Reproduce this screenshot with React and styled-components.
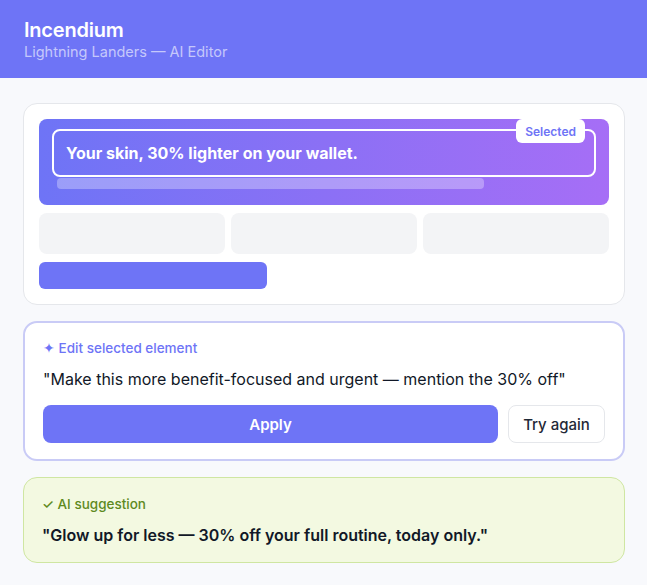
import React from "react";
import styled, { createGlobalStyle } from "styled-components";

const GlobalStyle = createGlobalStyle`
  * { box-sizing: border-box; }
  body {
    margin: 0;
    background: #f8f9fc;
    font-family: "Inter", "Noto Sans", sans-serif;
    color: #1f2937;
  }
`;

const Page = styled.div`
  width: 647px;
  min-height: 585px;
  background: #f8f9fc;
`;

const Header = styled.header`
  height: 78px;
  background: #6e74f6;
  padding: 18px 24px 0;
`;

const Title = styled.h1`
  margin: 0;
  font-size: 20px;
  font-weight: 600;
  color: #ffffff;
  letter-spacing: -0.2px;
  line-height: 24px;
`;

const Subtitle = styled.div`
  font-size: 14.5px;
  color: #c5c8fb;
  line-height: 18px;
  margin-top: 1px;
`;

const Body = styled.main`
  display: flex;
  flex-direction: column;
  gap: 16px;
  padding: 25px 22px 0 23px;
`;

const Card = styled.section`
  background: ${(p) => p.$bg || "#ffffff"};
  border: ${(p) => p.$border || "1px solid #e5e7eb"};
  border-radius: 14px;
  padding: ${(p) => p.$pad || "15px"};
`;

const Hero = styled.div`
  position: relative;
  height: 86px;
  border-radius: 8px;
  background: linear-gradient(90deg, #6e74f6 0%, #8b70f5 50%, #a66ef6 100%);
  padding: 10px 13px 0 13px;
`;

const SelectedBox = styled.div`
  height: 48px;
  border: 2.5px solid #ffffff;
  border-radius: 8px;
  display: flex;
  align-items: center;
  padding-left: 12px;
  font-size: 16px;
  font-weight: 700;
  color: #ffffff;
`;

const Badge = styled.span`
  position: absolute;
  top: 0;
  right: 24px;
  height: 24px;
  display: flex;
  align-items: center;
  background: #ffffff;
  color: #6e74f6;
  font-size: 12px;
  font-weight: 600;
  padding: 0 9px;
  border-radius: 6px;
`;

const Bar = styled.div`
  margin: 1px 0 0 5px;
  width: 427px;
  height: 11px;
  border-radius: 4px;
  background: rgba(255, 255, 255, 0.3);
`;

const Grid = styled.div`
  display: grid;
  grid-template-columns: repeat(3, 1fr);
  gap: 6px;
  margin-top: 8px;
`;

const Tile = styled.div`
  height: 41px;
  border-radius: 8px;
  background: #f3f4f6;
`;

const Cta = styled.div`
  width: 228px;
  height: 27px;
  border-radius: 6px;
  background: #6e74f6;
  margin-top: 8px;
`;

const Label = styled.div`
  font-size: 13.5px;
  font-weight: 500;
  color: ${(p) => p.$color};
  line-height: 16px;
`;

const Quote = styled.p`
  margin: ${(p) => p.$margin};
  font-size: 16px;
  font-weight: ${(p) => p.$weight || 400};
  color: #111827;
  line-height: 20px;
`;

const Actions = styled.div`
  display: flex;
  gap: 10px;
  margin-top: 16px;
`;

const Button = styled.button`
  height: 38px;
  border-radius: 8px;
  font-family: inherit;
  font-size: 15px;
  font-weight: ${(p) => (p.$primary ? 600 : 500)};
  cursor: pointer;
  border: ${(p) => (p.$primary ? "none" : "1px solid #e5e7eb")};
  background: ${(p) => (p.$primary ? "#6e74f6" : "#ffffff")};
  color: ${(p) => (p.$primary ? "#ffffff" : "#1f2937")};
  flex: ${(p) => (p.$primary ? 1 : "0 0 97px")};
`;

export default function App() {
  return (
    <>
      <GlobalStyle />
      <Page>
        <Header>
          <Title>Incendium</Title>
          <Subtitle>Lightning Landers — AI Editor</Subtitle>
        </Header>
        <Body>
          <Card>
            <Hero>
              <SelectedBox>Your skin, 30% lighter on your wallet.</SelectedBox>
              <Bar />
              <Badge>Selected</Badge>
            </Hero>
            <Grid>
              <Tile />
              <Tile />
              <Tile />
            </Grid>
            <Cta />
          </Card>

          <Card $border="2px solid #c9cbf6" $pad="17px 18px 16px">
            <Label $color="#6e74f6">✦ Edit selected element</Label>
            <Quote $margin="13px 0 0">
              "Make this more benefit-focused and urgent — mention the 30% off"
            </Quote>
            <Actions>
              <Button $primary>Apply</Button>
              <Button>Try again</Button>
            </Actions>
          </Card>

          <Card $bg="#f3f9e1" $border="1px solid #cfe6a2" $pad="18px 18px 17px">
            <Label $color="#5e8a1e">✓ AI suggestion</Label>
            <Quote $margin="13px 0 0" $weight={600}>
              "Glow up for less — 30% off your full routine, today only."
            </Quote>
          </Card>
        </Body>
      </Page>
    </>
  );
}
